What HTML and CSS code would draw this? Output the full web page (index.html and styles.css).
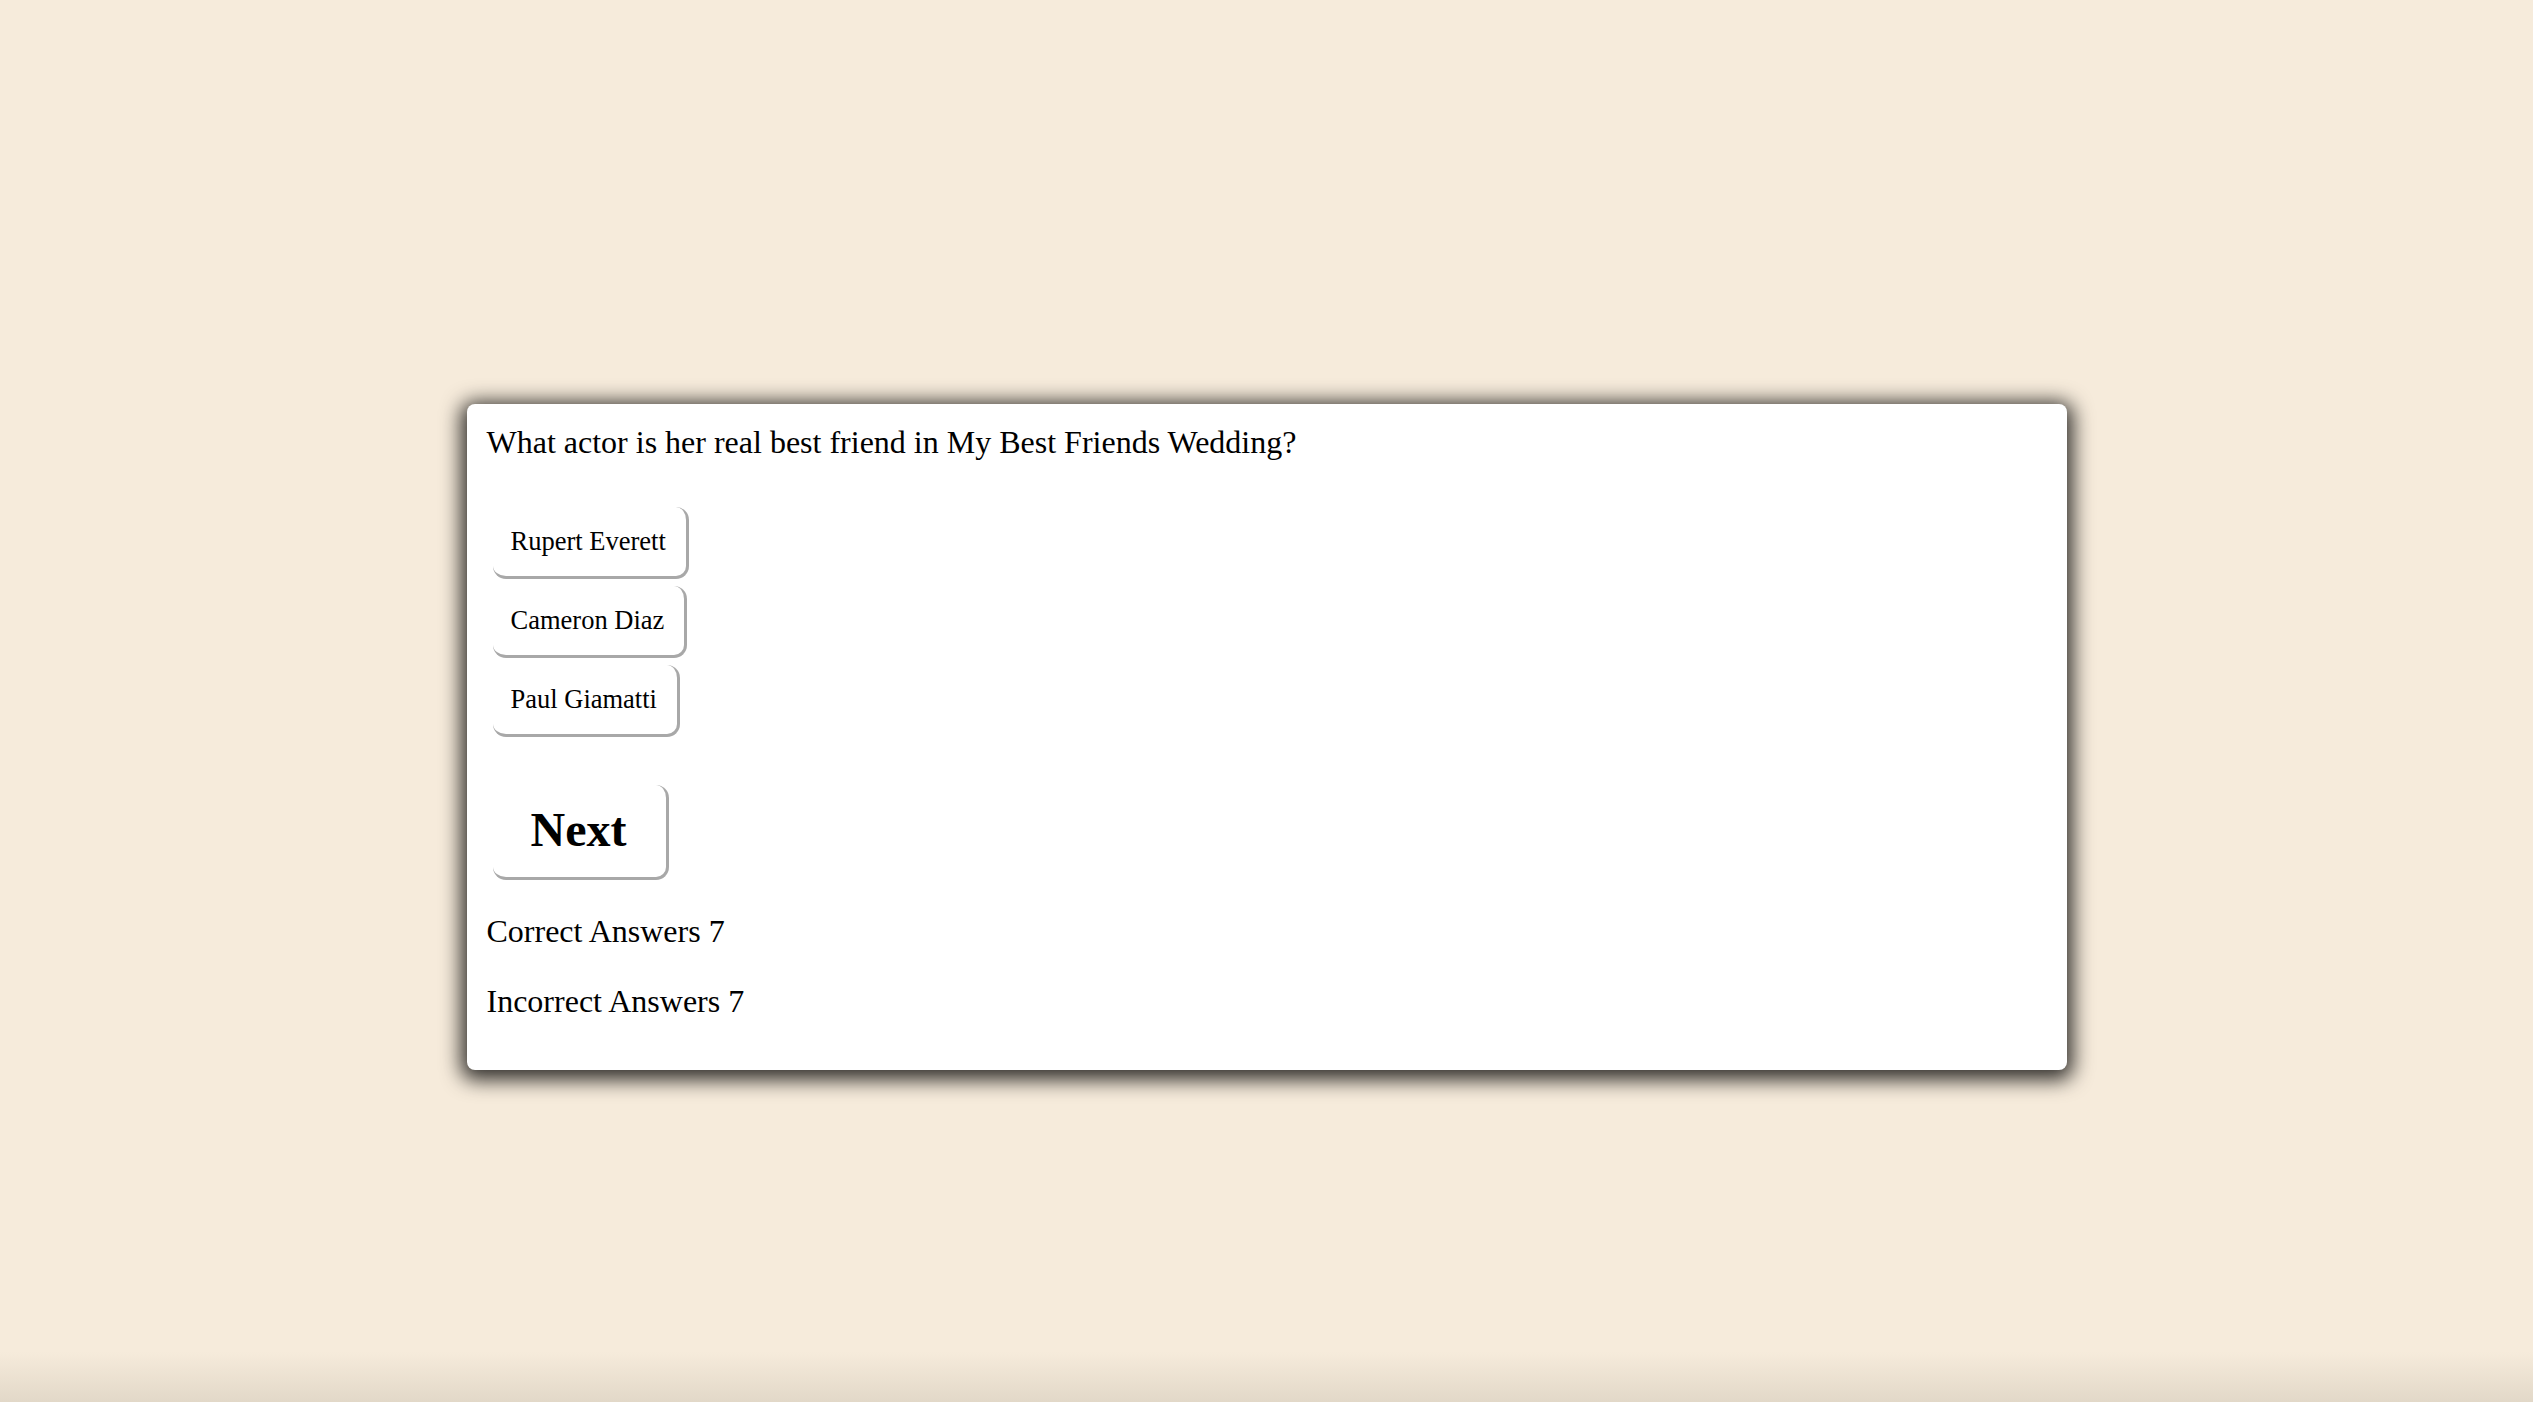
FILE: index.html
```html
<!DOCTYPE html>
<html lang="en">
<head>
<meta charset="utf-8">
<title>Trivia</title>
<link rel="stylesheet" href="styles.css">
</head>
<body>
<main class="page">
  <section class="card">
    <div class="question">What actor is her real best friend in My Best Friends Wedding?</div>
    <div class="answers">
      <button class="answer">Rupert Everett</button>
      <button class="answer">Cameron Diaz</button>
      <button class="answer">Paul Giamatti</button>
    </div>
    <button class="next">Next</button>
    <p class="score">Correct Answers 7</p>
    <p class="score">Incorrect Answers 7</p>
  </section>
</main>
</body>
</html>
```
FILE: styles.css
```css
html, body {
  margin: 0;
  padding: 0;
}
body {
  background: linear-gradient(to bottom, #f6ebdb 0, #f6ebdb calc(100% - 50px), #e2d8c8 100%);
  min-height: 100vh;
  font-family: "Liberation Serif", "Times New Roman", serif;
  color: #000;
}
.page {
  display: flex;
  justify-content: center;
  align-items: flex-start;
  padding-top: 404px;
  min-height: 100vh;
  box-sizing: border-box;
}
.card {
  width: 1600px;
  box-sizing: border-box;
  background: #fff;
  border-radius: 8px;
  padding: 20px;
  box-shadow: 0 4px 20px 6px rgba(0, 0, 0, 0.8);
}
.question {
  font-size: 32px;
  line-height: 37px;
  margin: 0 0 46px 0;
}
.answers {
  display: flex;
  flex-direction: column;
  align-items: flex-start;
  gap: 7px;
  margin-left: 6px;
}
.answer,
.next {
  font-family: "Liberation Serif", "Times New Roman", serif;
  color: #000;
  background: #fff;
  border: none;
  border-right: 3px solid #a8a8a8;
  border-bottom: 3px solid #a8a8a8;
  border-radius: 13px;
  cursor: pointer;
}
.answer {
  font-size: 26.5px;
  line-height: 30px;
  padding: 19px 20px 20px 18px;
}
.next {
  display: block;
  font-size: 48px;
  font-weight: bold;
  line-height: 54px;
  padding: 18px 40px 20px 38px;
  margin: 48px 0 0 6px;
}
.score {
  font-size: 32px;
  line-height: 37px;
  margin: 33px 0;
}
.score:last-child {
  margin-bottom: 30px;
}
```
